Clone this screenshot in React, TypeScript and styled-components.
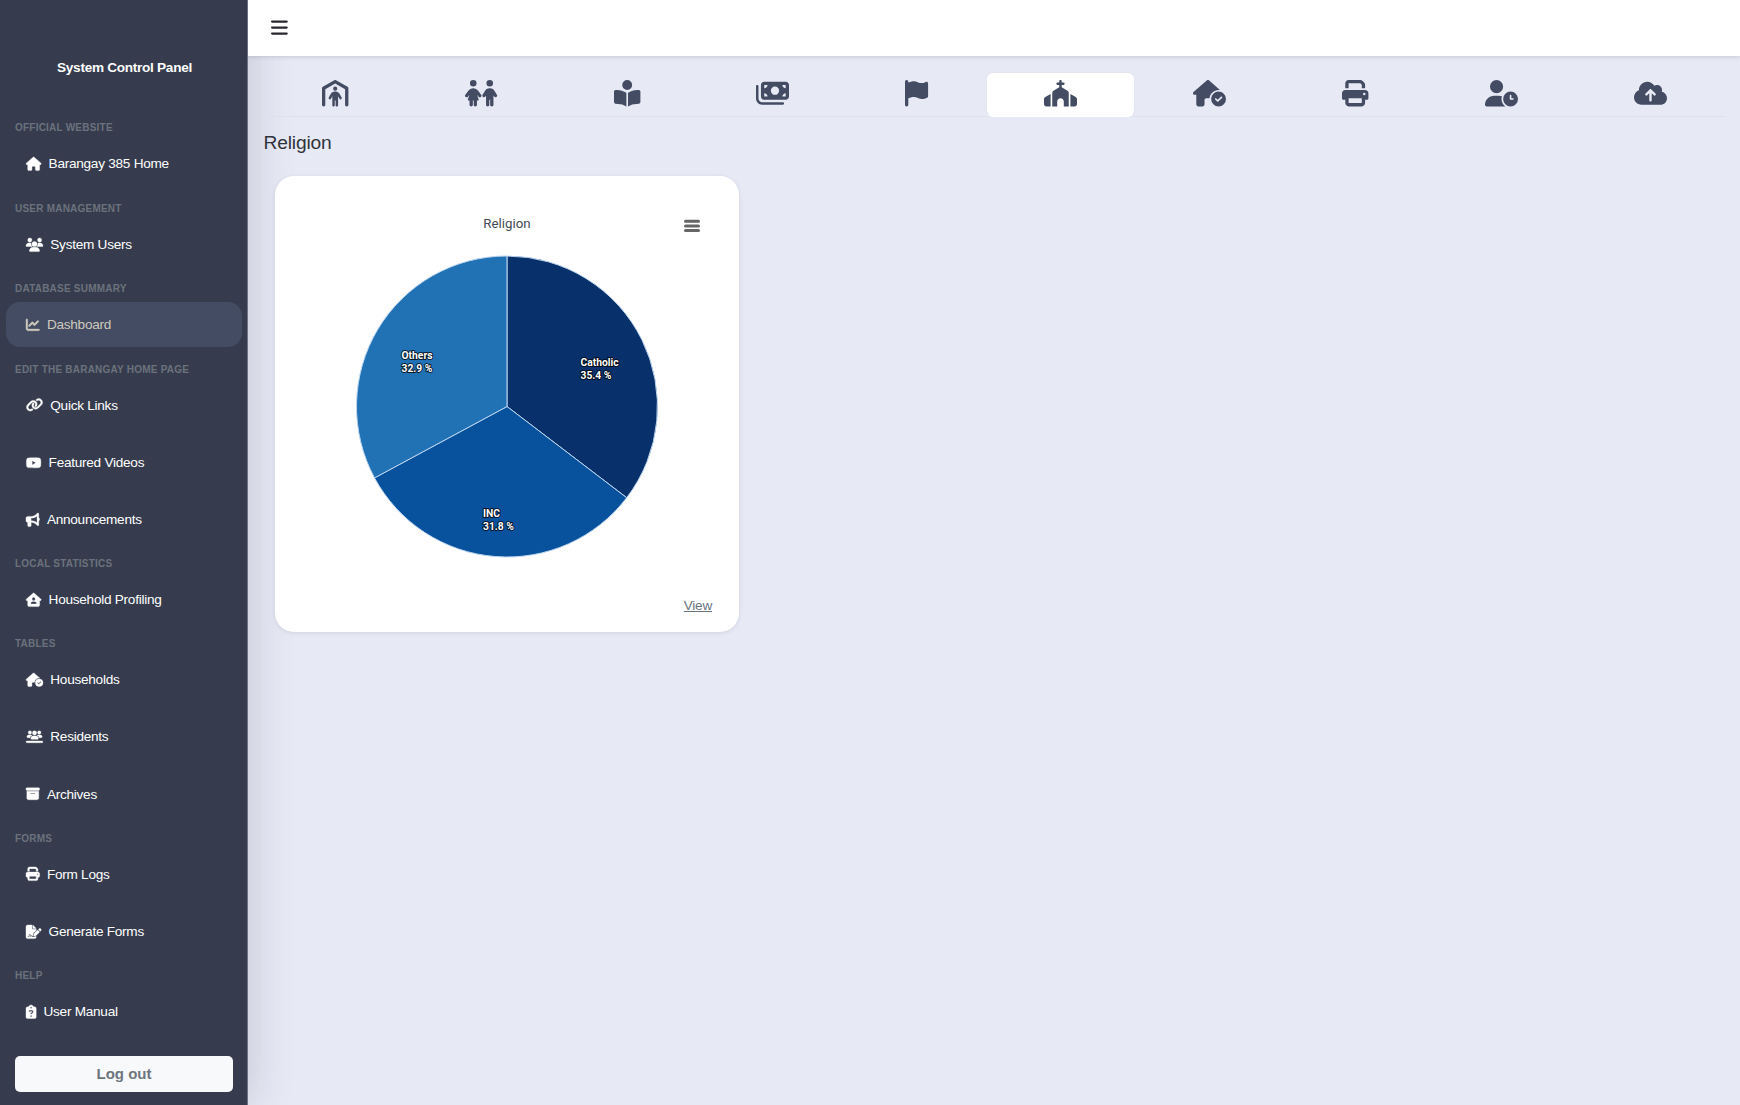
import React from "react";
import styled, { createGlobalStyle } from "styled-components";
import type { IconType } from "react-icons";
import {
  FaHouse, FaUsers, FaChartLine, FaLink, FaYoutube, FaBullhorn, FaHouseUser,
  FaHouseCircleCheck, FaUsersLine, FaBoxArchive, FaPrint, FaFileSignature,
  FaClipboardQuestion, FaPersonShelter, FaChildren, FaBookOpenReader,
  FaMoneyBills, FaFlag, FaChurch, FaUserClock, FaCloudArrowUp, FaBars,
} from "react-icons/fa6";

const Global = createGlobalStyle`
  *, *::before, *::after { box-sizing: border-box; }
  body { margin: 0; background: #e7e9f5; font-family: "Liberation Sans", Arial, sans-serif; overflow: hidden; }
`;

const Shell = styled.div`
  display: flex;
  height: 1105px;
`;

const Sidebar = styled.aside`
  width: 248px;
  flex: none;
  display: flex;
  flex-direction: column;
  background: #363c4d;
  border-right: 1px solid #6f7484;
  box-shadow: 0 0 42px rgba(60, 60, 80, 0.22);
`;

const Brand = styled.h1`
  margin: 0;
  padding: 59px 0 0 2px;
  height: 115px;
  text-align: center;
  font-size: 13.6px;
  line-height: 17px;
  letter-spacing: -0.28px;
  color: #fff;
`;

const SectionTitle = styled.h2`
  margin: 0;
  height: 26px;
  padding: 6px 15px 0;
  font-size: 10px;
  line-height: 13px;
  letter-spacing: 0.22px;
  text-transform: uppercase;
  color: #6b727d;
`;

const Glyph = styled.span<{ $w: number; $size: number }>`
  display: inline-flex;
  width: ${(p) => p.$w * p.$size}px;
  height: ${(p) => p.$size}px;
  flex: none;
  svg { width: 100%; height: 100%; display: block; overflow: visible; }
`;

const NavItem = styled.a<{ $active?: boolean }>`
  display: flex;
  align-items: center;
  height: 45px;
  margin: 0 5px 0 6px;
  padding-left: 20px;
  gap: 7.3px;
  border-radius: 14px;
  font-size: 13.6px;
  letter-spacing: -0.26px;
  color: ${(p) => (p.$active ? "#cfc9bd" : "#fff")};
  background: ${(p) => (p.$active ? "#434c63" : "transparent")};
  ${Glyph} svg { stroke: currentColor; stroke-width: 14px; }
`;

const NavGroup = styled.section<{ $h: number }>`
  height: ${(p) => p.$h}px;
  display: flex;
  flex-direction: column;
`;

const NavList = styled.div`
  display: flex;
  flex-direction: column;
  gap: 12.3px;
`;

const Logout = styled.button`
  margin: 11.5px 14px 0 15px;
  height: 36px;
  flex: none;
  border: 0;
  border-radius: 5px;
  background: #f8f9fa;
  color: #6c757d;
  font: bold 15px "Liberation Sans", Arial, sans-serif;
`;

const Main = styled.main`
  flex: 1;
  display: flex;
  flex-direction: column;
`;

const Topbar = styled.header`
  position: relative;
  height: 56px;
  display: flex;
  align-items: center;
  padding-left: 23px;
  background: #fff;
  color: #26282e;
  box-shadow: 0 1px 4px rgba(60, 60, 80, 0.18);
`;

const Tabs = styled.nav`
  display: flex;
  margin: 16px 15px 0 16px;
  height: 44.5px;
  border-bottom: 1px solid #dee1ec;
`;

const Tab = styled.a<{ $active?: boolean }>`
  flex: 1 1 auto;
  display: flex;
  justify-content: center;
  height: 45px;
  padding-top: 6.5px;
  border-radius: 7px;
  border: 1px solid ${(p) => (p.$active ? "#e3e6ef" : "transparent")};
  border-bottom-color: ${(p) => (p.$active ? "#fff" : "transparent")};
  background: ${(p) => (p.$active ? "#fff" : "transparent")};
  color: #434c63;
`;

const PageTitle = styled.h3`
  margin: 14.5px 0 0 15.5px;
  font-size: 19.2px;
  line-height: 23px;
  letter-spacing: -0.15px;
  font-weight: 400;
  color: #2f333b;
`;

const Card = styled.article`
  position: relative;
  width: 464px;
  height: 456px;
  margin: 22px 0 0 27px;
  padding: 38px 26px 18px;
  display: flex;
  flex-direction: column;
  border-radius: 19px;
  background: #fff;
  box-shadow: 0 1px 4px rgba(60, 60, 80, 0.13);
`;

const CardHead = styled.div`
  display: grid;
  grid-template-columns: 1fr auto 1fr;
  height: 41px;
  font-family: Roboto, sans-serif;
  font-size: 13.3px;
  line-height: 20px;
  color: #444c55;
`;

const MenuIcon = styled.svg`
  justify-self: end;
  margin: 5px 13.5px 0 0;
`;

const Pie = styled.svg`
  display: block;
  align-self: center;
  text { font: bold 10.3px Roboto, sans-serif; fill: #fff; stroke: #000; stroke-width: 2px; stroke-opacity: 0.75; paint-order: stroke; stroke-linejoin: round; }
`;

const ViewLink = styled.a`
  margin: auto 1px 0 0;
  align-self: flex-end;
  font-family: "Liberation Sans", Arial, sans-serif;
  font-size: 13.6px;
  line-height: 17px;
  letter-spacing: -0.25px;
  text-decoration: underline;
  color: #6c757d;
`;

type Entry = { icon: IconType; w: number; label: string; active?: boolean };
const groups: { title: string; h: number; items: Entry[] }[] = [
  { title: "Official Website", h: 81, items: [{ icon: FaHouse, w: 1.125, label: "Barangay 385 Home" }] },
  { title: "User Management", h: 80, items: [{ icon: FaUsers, w: 1.25, label: "System Users" }] },
  { title: "Database Summary", h: 80.5, items: [{ icon: FaChartLine, w: 1, label: "Dashboard", active: true }] },
  {
    title: "Edit the Barangay Home Page", h: 194.5, items: [
      { icon: FaLink, w: 1.25, label: "Quick Links" },
      { icon: FaYoutube, w: 1.125, label: "Featured Videos" },
      { icon: FaBullhorn, w: 1, label: "Announcements" },
    ],
  },
  { title: "Local Statistics", h: 80, items: [{ icon: FaHouseUser, w: 1.125, label: "Household Profiling" }] },
  {
    title: "Tables", h: 194.7, items: [
      { icon: FaHouseCircleCheck, w: 1.25, label: "Households" },
      { icon: FaUsersLine, w: 1.25, label: "Residents" },
      { icon: FaBoxArchive, w: 1, label: "Archives" },
    ],
  },
  {
    title: "Forms", h: 137.5, items: [
      { icon: FaPrint, w: 1, label: "Form Logs" },
      { icon: FaFileSignature, w: 1.125, label: "Generate Forms" },
    ],
  },
  { title: "Help", h: 81, items: [{ icon: FaClipboardQuestion, w: 0.75, label: "User Manual" }] },
];

const tabs: { icon: IconType; w: number; active?: boolean }[] = [
  { icon: FaPersonShelter, w: 1 },
  { icon: FaChildren, w: 1.25 },
  { icon: FaBookOpenReader, w: 1 },
  { icon: FaMoneyBills, w: 1.25 },
  { icon: FaFlag, w: 0.875 },
  { icon: FaChurch, w: 1.25, active: true },
  { icon: FaHouseCircleCheck, w: 1.25 },
  { icon: FaPrint, w: 1 },
  { icon: FaUserClock, w: 1.25 },
  { icon: FaCloudArrowUp, w: 1.25 },
];

const slices = [
  { name: "Catholic", value: 35.4, color: "#08306b", x: 224.5, y: 111.2 },
  { name: "INC", value: 31.8, color: "#08519c", x: 127, y: 261.5 },
  { name: "Others", value: 32.9, color: "#2171b5", x: 45.5, y: 103.7 },
];

const R = 150.5;
const CX = 151;
const CY = 151.5;

function PieChart() {
  const total = slices.reduce((s, d) => s + d.value, 0);
  let acc = 0;
  const point = (v: number) => {
    const a = (v / total) * Math.PI * 2;
    return `${CX + R * Math.sin(a)} ${CY - R * Math.cos(a)}`;
  };
  return (
    <Pie width="302" height="303" viewBox="0 0 302 303">
      {slices.map((s) => {
        const from = acc;
        acc += s.value;
        return (
          <path
            key={s.name}
            d={`M${CX} ${CY}L${point(from)}A${R} ${R} 0 0 1 ${point(acc)}Z`}
            fill={s.color}
            stroke="#bcd6f0"
            strokeWidth="1"
          />
        );
      })}
      {slices.map((s) => (
        <text key={s.name}>
          <tspan x={s.x} y={s.y}>{s.name}</tspan>
          <tspan x={s.x} dy="13">{s.value} %</tspan>
        </text>
      ))}
    </Pie>
  );
}

export default function App() {
  return (
    <>
      <Global />
      <Shell>
        <Sidebar>
          <Brand>System Control Panel</Brand>
          {groups.map((g) => (
            <NavGroup key={g.title} $h={g.h}>
              <SectionTitle>{g.title}</SectionTitle>
              <NavList>
                {g.items.map(({ icon: Icon, w, label, active }) => (
                  <NavItem key={label} $active={active}>
                    <Glyph $w={w} $size={13.6}><Icon /></Glyph>
                    {label}
                  </NavItem>
                ))}
              </NavList>
            </NavGroup>
          ))}
          <Logout>Log out</Logout>
        </Sidebar>
        <Main>
          <Topbar>
            <Glyph $w={0.875} $size={19.2}><FaBars /></Glyph>
          </Topbar>
          <Tabs>
            {tabs.map(({ icon: Icon, w, active }, i) => (
              <Tab key={i} $active={active}>
                <Glyph $w={w} $size={26.4}><Icon /></Glyph>
              </Tab>
            ))}
          </Tabs>
          <PageTitle>Religion</PageTitle>
          <Card>
            <CardHead>
              <span />
              <span>Religion</span>
              <MenuIcon width="16" height="14" viewBox="0 0 16 14" stroke="#666" strokeWidth="3" strokeLinecap="round">
                <path d="M1.5 2.2H14.5M1.5 6.9H14.5M1.5 11.5H14.5" />
              </MenuIcon>
            </CardHead>
            <PieChart />
            <ViewLink>View</ViewLink>
          </Card>
        </Main>
      </Shell>
    </>
  );
}
